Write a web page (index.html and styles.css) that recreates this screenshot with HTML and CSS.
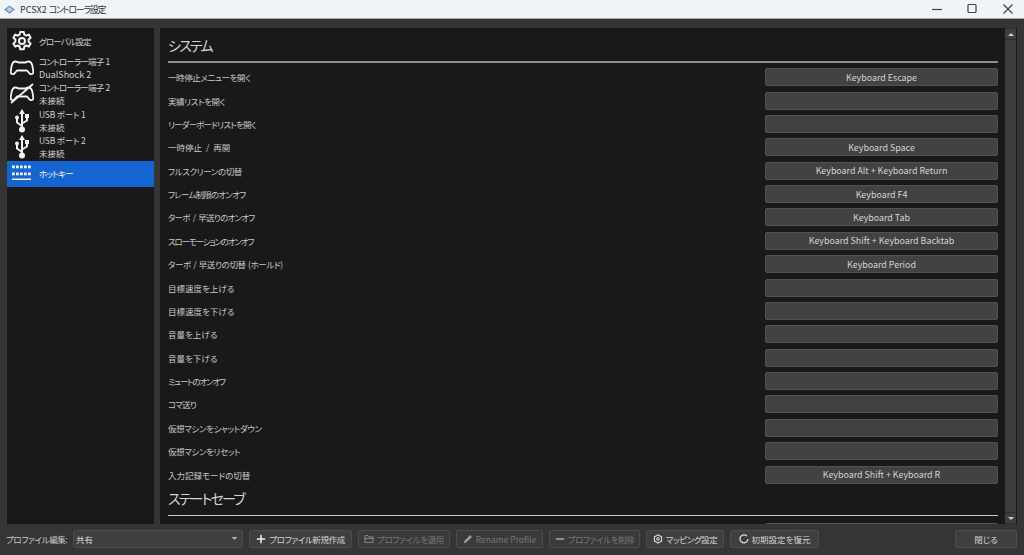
FILE: index.html
```html
<!DOCTYPE html>
<html lang="ja">
<head>
<meta charset="utf-8">
<title>PCSX2 コントローラ設定</title>
<link rel="stylesheet" href="styles.css">
</head>
<body>
<header class="titlebar">
  <svg class="app-icon" viewBox="0 0 16 12"><path d="M8 0l8 6-8 6-8-6z" fill="#6f93c4"/><path d="M8 2.500l4.500 3.500L8 9.500 3.500 6z" fill="#c3d2e8"/></svg>
  <span class="app-title">PCSX2 <span class="app-title-ja">コントローラ設定</span></span>
  <div class="win-controls">
    <svg viewBox="0 0 12 12"><path d="M1 6.500h10" stroke="#444" stroke-width="1.200"/></svg>
    <svg viewBox="0 0 12 12"><rect x="2" y="1.500" width="8" height="8" rx="1" fill="none" stroke="#444" stroke-width="1.200"/></svg>
    <svg viewBox="0 0 12 12"><path d="M1.500 1.500l9 9M10.500 1.500l-9 9" stroke="#444" stroke-width="1.200"/></svg>
  </div>
</header>
<main class="main">
  <nav class="sidebar">
    <div class="nav-item">
      <svg class="nav-icon" viewBox="0 0 24 24"><path d="M10.200 2h3.600l.6 2.700 1.900 1 2.500-1.100 1.800 3.100-2 1.800v2.200l2 1.800-1.800 3.100-2.500-1.100-1.900 1-.6 2.700h-3.600l-.6-2.700-1.900-1-2.500 1.100-1.800-3.100 2-1.800v-2.200l-2-1.800 1.800-3.100 2.500 1.100 1.900-1z" fill="none" stroke="#f2f2f2" stroke-width="2" stroke-linejoin="round" transform="translate(0 1)"/><circle cx="12" cy="12" r="3" fill="none" stroke="#f2f2f2" stroke-width="2"/></svg>
      <div class="nav-text"><span class="t2">グローバル設定</span></div>
    </div>
    <div class="nav-item">
      <svg class="nav-icon" viewBox="0 0 24 24"><path d="M5.500 5.500c2 0 2.500 1 4 1h5c1.500 0 2-1 4-1 2.500 0 3.500 2 4 5l.8 5c.3 2.500-2.300 3.500-3.800 1.800l-2.500-2.800h-10l-2.500 2.800C3 19 .4 18 .700 15.500l.8-5c.5-3 1.500-5 4-5z" fill="none" stroke="#f2f2f2" stroke-width="1.800" stroke-linejoin="round"/></svg>
      <div class="nav-text"><span class="t2 ws1">コントローラー端子 1</span><span class="latin">DualShock 2</span></div>
    </div>
    <div class="nav-item">
      <svg class="nav-icon" viewBox="0 0 24 24"><path d="M5.500 5.500c2 0 2.500 1 4 1h5c1.500 0 2-1 4-1 2.500 0 3.500 2 4 5l.8 5c.3 2.500-2.300 3.500-3.800 1.800l-2.500-2.800h-10l-2.500 2.800C3 19 .4 18 .700 15.500l.8-5c.5-3 1.500-5 4-5z" fill="none" stroke="#f2f2f2" stroke-width="1.800" stroke-linejoin="round"/><path d="M1 21L23 2" stroke="#f2f2f2" stroke-width="1.800"/></svg>
      <div class="nav-text"><span class="t2 ws1">コントローラー端子 2</span><span>未接続</span></div>
    </div>
    <div class="nav-item">
      <svg class="nav-icon" viewBox="0 0 24 24"><path d="M12 1.500v18M12 17l-5-3.500V10M12 14.500l5-3V8" fill="none" stroke="#f2f2f2" stroke-width="2"/><path d="M12 0l3 5H9z" fill="#f2f2f2"/><circle cx="12" cy="20.500" r="3" fill="#f2f2f2"/><circle cx="7" cy="8.500" r="2" fill="#f2f2f2"/><rect x="15" y="5" width="4" height="4" fill="#f2f2f2"/></svg>
      <div class="nav-text"><span class="t0">USB ポート 1</span><span>未接続</span></div>
    </div>
    <div class="nav-item">
      <svg class="nav-icon" viewBox="0 0 24 24"><path d="M12 1.500v18M12 17l-5-3.500V10M12 14.500l5-3V8" fill="none" stroke="#f2f2f2" stroke-width="2"/><path d="M12 0l3 5H9z" fill="#f2f2f2"/><circle cx="12" cy="20.500" r="3" fill="#f2f2f2"/><circle cx="7" cy="8.500" r="2" fill="#f2f2f2"/><rect x="15" y="5" width="4" height="4" fill="#f2f2f2"/></svg>
      <div class="nav-text"><span class="t0">USB ポート 2</span><span>未接続</span></div>
    </div>
    <div class="nav-item nav-active">
      <svg class="nav-icon" viewBox="0 0 24 24"><g fill="#f2f2f2"><rect x="2" y="3.500" width="2.800" height="2.800"/><rect x="6" y="3.500" width="2.800" height="2.800"/><rect x="10" y="3.500" width="2.800" height="2.800"/><rect x="14" y="3.500" width="2.800" height="2.800"/><rect x="18" y="3.500" width="2.800" height="2.800"/><rect x="2" y="10.500" width="2.800" height="2.800"/><rect x="6" y="10.500" width="2.800" height="2.800"/><rect x="10" y="10.500" width="2.800" height="2.800"/><rect x="14" y="10.500" width="2.800" height="2.800"/><rect x="18" y="10.500" width="2.800" height="2.800"/><rect x="2" y="16.500" width="19" height="1.500"/></g></svg>
      <div class="nav-text"><span class="t2">ホットキー</span></div>
    </div>
  </nav>
  <section class="panel">
    <div class="scroll-area">
      <h2 class="section-title">システム</h2>
      <hr class="rule rule-thick">
      <div class="rows">
        <div class="row"><span class="t1">一時停止メニューを開く</span><button class="bind">Keyboard Escape</button></div>
        <div class="row"><span class="t1">実績リストを開く</span><button class="bind"></button></div>
        <div class="row"><span class="t2">リーダーボードリストを開く</span><button class="bind"></button></div>
        <div class="row"><span class="ws2">一時停止 / 再開</span><button class="bind">Keyboard Space</button></div>
        <div class="row"><span class="t1">フルスクリーンの切替</span><button class="bind">Keyboard Alt + Keyboard Return</button></div>
        <div class="row"><span class="t2">フレーム制限のオンオフ</span><button class="bind">Keyboard F4</button></div>
        <div class="row"><span class="t2 ws2">ターボ / 早送りのオンオフ</span><button class="bind">Keyboard Tab</button></div>
        <div class="row"><span class="t3">スローモーションのオンオフ</span><button class="bind">Keyboard Shift + Keyboard Backtab</button></div>
        <div class="row"><span class="t1 ws1">ターボ / 早送りの切替 (ホールド)</span><button class="bind">Keyboard Period</button></div>
        <div class="row"><span>目標速度を上げる</span><button class="bind"></button></div>
        <div class="row"><span>目標速度を下げる</span><button class="bind"></button></div>
        <div class="row"><span>音量を上げる</span><button class="bind"></button></div>
        <div class="row"><span>音量を下げる</span><button class="bind"></button></div>
        <div class="row"><span class="t3">ミュートのオンオフ</span><button class="bind"></button></div>
        <div class="row"><span class="t2">コマ送り</span><button class="bind"></button></div>
        <div class="row"><span class="t1">仮想マシンをシャットダウン</span><button class="bind"></button></div>
        <div class="row"><span class="t1">仮想マシンをリセット</span><button class="bind"></button></div>
        <div class="row"><span>入力記録モードの切替</span><button class="bind">Keyboard Shift + Keyboard R</button></div>
      </div>
      <h2 class="section-title section-next">ステートセーブ</h2>
      <hr class="rule">
      <div class="rows rows-next">
        <div class="row"><span></span><button class="bind"></button></div>
      </div>
    </div>
    <div class="scrollbar">
      <div class="sb-btn"><svg viewBox="0 0 8 4"><path d="M0 4l4-4 4 4z" fill="#cfcfcf"/></svg></div>
      <div class="sb-thumb"></div>
      <div class="sb-btn"><svg viewBox="0 0 8 4"><path d="M0 0l4 4 4-4z" fill="#cfcfcf"/></svg></div>
    </div>
  </section>
</main>
<footer class="footer">
  <label class="profile-label t1">プロファイル編集:</label>
  <div class="select"><span>共有</span><svg viewBox="0 0 8 4"><path d="M0 0l4 4 4-4z" fill="#aaa"/></svg></div>
  <button class="btn btn-new t1"><svg class="btn-icon" viewBox="0 0 12 12"><path d="M6 1v10M1 6h10" stroke="#eee" stroke-width="1.800"/></svg>プロファイル新規作成</button>
  <button class="btn btn-off btn-apply t1"><svg class="btn-icon" viewBox="0 0 12 12"><path d="M1 2h4l1 1.500h5V10H1zM1 5.500h10" fill="none" stroke="#8a8a8a" stroke-width="1.200"/></svg>プロファイルを適用</button>
  <button class="btn btn-off btn-rename"><svg class="btn-icon" viewBox="0 0 12 12"><path d="M1 11l.7-3L8.500 1.200l2.300 2.300L4 10.300z" fill="#999"/></svg>Rename Profile</button>
  <button class="btn btn-off btn-delete t1"><svg class="btn-icon" viewBox="0 0 12 12"><path d="M1 6h10" stroke="#aaa" stroke-width="1.800"/></svg>プロファイルを削除</button>
  <button class="btn btn-map t1"><svg class="btn-icon" viewBox="0 0 12 12"><path d="M6 1l4.300 2.500v5L6 11 1.700 8.500v-5z" fill="none" stroke="#ddd" stroke-width="1.300"/><circle cx="6" cy="6" r="1.600" fill="none" stroke="#ddd" stroke-width="1.200"/></svg>マッピング設定</button>
  <button class="btn btn-reset"><svg class="btn-icon" viewBox="0 0 12 12"><path d="M9.500 2.500A4.800 4.800 0 1 0 10.800 6" fill="none" stroke="#ddd" stroke-width="1.500"/></svg>初期設定を復元</button>
  <button class="btn btn-close">閉じる</button>
</footer>
</body>
</html>
```
FILE: styles.css
```css
* { box-sizing: border-box; }
html, body { margin: 0; height: 100%; }
body {
  width: 1024px;
  height: 555px;
  overflow: hidden;
  display: flex;
  flex-direction: column;
  background: #353535;
  color: #d8d8d8;
  font-family: "Noto Sans CJK JP", "Noto Sans", sans-serif;
  font-size: 8.500px;
  font-feature-settings: "palt";
}
.t0 { letter-spacing: -.2px; }
.t1 { letter-spacing: -.4px; }
.t2 { letter-spacing: -.8px; }
.t3 { letter-spacing: -1.200px; }
.ws1 { word-spacing: 1px; }
.ws2 { word-spacing: 2px; }
.latin { font-size: 9px; }
.titlebar {
  height: 19px;
  flex: none;
  display: flex;
  align-items: center;
  padding-left: 4px;
  background: #eff4f9;
  border-bottom: 1px solid #a8abae;
  color: #333;
}
.app-icon { width: 11px; height: 9px; margin-right: 5px; }
.app-title { font-size: 9px; }
.app-title-ja { letter-spacing: -1.300px; }
.win-controls { margin-left: auto; display: flex; gap: 23.500px; padding-right: 10.500px; }
.win-controls svg { width: 12px; height: 12px; }
.main {
  flex: none;
  height: 506px;
  display: flex;
  padding: 9px 7px 0;
  gap: 6px;
}
.sidebar {
  width: 147px;
  height: 496px;
  background: #191919;
  display: flex;
  flex-direction: column;
}
.nav-item {
  height: 26.500px;
  display: flex;
  align-items: center;
  color: #d0d0d0;
  line-height: 13px;
}
.nav-icon { width: 24px; height: 24px; margin: 0 5px 0 3px; flex: none; }
.nav-text { display: flex; flex-direction: column; }
.nav-active { background: #1464d2; color: #f0f0f0; }
.panel {
  width: 857px;
  height: 496px;
  background: #191919;
  display: flex;
  overflow: hidden;
}
.scroll-area {
  flex: 1;
  padding: 7px 7px 0 8px;
  overflow: hidden;
  min-width: 0;
}
.section-title {
  margin: 0;
  height: 20px;
  line-height: 20px;
  font-size: 14px;
  font-weight: 400;
  letter-spacing: -1.800px;
  color: #d4d4d4;
}
.section-next { margin-top: 4px; }
.rule {
  margin: 7px 0 0;
  border: 0;
  height: 1px;
  background: #c8c8c8;
}
.rule-thick { height: 2px; background: #8e8e8e; margin-top: 6px; }
.rows {
  display: flex;
  flex-direction: column;
  gap: 4px;
  margin-top: 4.500px;
}
.rows-next { margin-top: 6px; }
.row {
  height: 19.380px;
  display: flex;
  align-items: center;
  justify-content: space-between;
  color: #c8c8c8;
}
.bind {
  width: 233px;
  height: 18px;
  padding: 0;
  background: #424242;
  border: 1px solid #525252;
  border-radius: 2px;
  color: #d4d4d4;
  font: inherit;
  font-size: 8.900px;
  font-feature-settings: inherit;
  text-align: center;
}
.scrollbar {
  flex: none;
  width: 11px;
  margin-right: 1px;
  display: flex;
  flex-direction: column;
  gap: 1px;
  padding: 1px 0;
  background: #2e2e2e;
}
.sb-btn {
  height: 10px;
  background: #3f3f3f;
  display: flex;
  align-items: center;
  justify-content: center;
}
.sb-btn svg { width: 6px; height: 3px; }
.sb-thumb { flex: 1; background: #3c3c3c; }
.footer {
  flex: 1;
  display: flex;
  align-items: center;
  padding: 0 7px 3px 6px;
  gap: 6px;
}
.profile-label { color: #c8c8c8; width: 61px; white-space: nowrap; }
.select {
  width: 170px;
  height: 18px;
  background: #3f3f3f;
  border: 1px solid #4c4c4c;
  border-radius: 2px;
  display: flex;
  align-items: center;
  justify-content: space-between;
  padding: 0 4px 0 2px;
  color: #d4d4d4;
}
.select svg { width: 7px; height: 3px; }
.btn {
  height: 18px;
  padding: 0 5px;
  display: flex;
  align-items: center;
  justify-content: center;
  background: #3f3f3f;
  border: 1px solid #4c4c4c;
  border-radius: 2px;
  color: #d4d4d4;
  font: inherit;
  font-feature-settings: inherit;
  white-space: nowrap;
}
.btn-icon { width: 10px; height: 10px; margin-right: 3px; flex: none; }
.btn-off { color: #777; background: #3a3a3a; }
.btn-new { width: 103px; }
.btn-apply { width: 92px; }
.btn-rename { width: 87px; }
.btn-delete { width: 91px; }
.btn-map { width: 78px; }
.btn-reset { width: 89px; }
.btn-close { margin-left: auto; width: 62px; }
```
